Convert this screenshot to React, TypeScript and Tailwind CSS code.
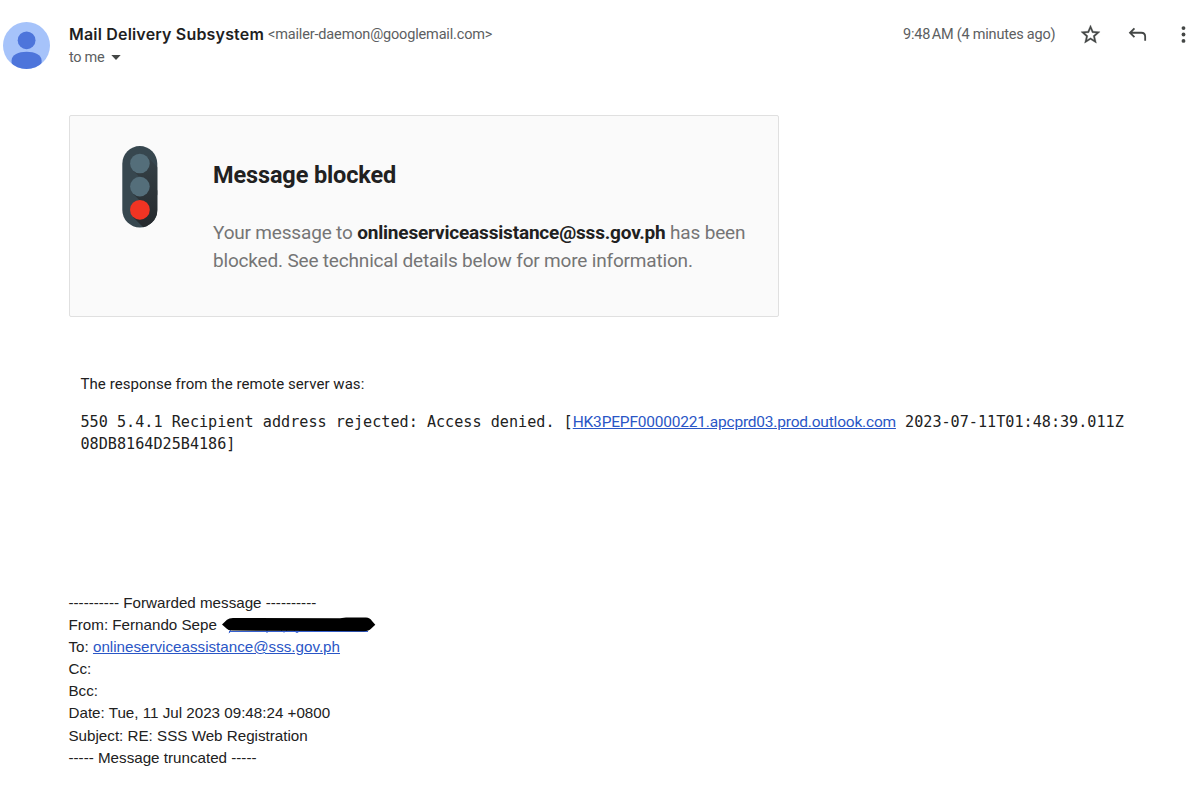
import React from "react";

const FORWARDED_FIELDS = [
  { label: "Cc:", value: "" },
  { label: "Bcc:", value: "" },
  { label: "Date:", value: "Tue, 11 Jul 2023 09:48:24 +0800" },
  { label: "Subject:", value: "RE: SSS Web Registration" },
];

const Avatar = () => (
  <svg className="w-[47px] h-[47px] shrink-0" viewBox="0 0 47 47">
    <defs>
      <clipPath id="avatar-clip">
        <circle cx="23.5" cy="23.5" r="23.5" />
      </clipPath>
    </defs>
    <g clipPath="url(#avatar-clip)">
      <rect width="47" height="47" fill="#a6c3fa" />
      <circle cx="23.6" cy="18.3" r="8.9" fill="#4d75db" />
      <path d="M8.6 47V38.5C8.6 32.5 15.5 29.7 23.6 29.7S38.6 32.5 38.6 38.5V47Z" fill="#4d75db" />
    </g>
  </svg>
);

const TrafficLight = () => (
  <svg className="w-[36px] h-[82px] shrink-0" viewBox="0 0 36 82">
    <defs>
      <clipPath id="light-clip">
        <rect x="0.3" y="0.1" width="35" height="81.4" rx="17.5" />
      </clipPath>
      <linearGradient id="light-shadow" x1="0" y1="0" x2="0" y2="82" gradientUnits="userSpaceOnUse">
        <stop offset="0.15" stopColor="#354147" />
        <stop offset="1" stopColor="#25292c" />
      </linearGradient>
    </defs>
    <g clipPath="url(#light-clip)">
      <rect width="36" height="82" fill="#37474f" />
      <g fill="url(#light-shadow)">
        <path d="M24.9 10.5L36 21.6V49.5L10.9 24.5Z" />
        <path d="M24.9 33.7L36 44.8V72.8L10.9 47.7Z" />
        <path d="M24.9 56.9L36 68V82H22L10.9 70.9Z" />
      </g>
    </g>
    <circle cx="17.9" cy="17.5" r="9.8" fill="#546e7a" />
    <circle cx="17.9" cy="40.6" r="9.8" fill="#546e7a" />
    <circle cx="17.9" cy="63.8" r="9.9" fill="#f03423" />
  </svg>
);

const RedactedAddress = () => (
  <svg className="w-[156px] h-[22px] shrink-0" viewBox="0 0 156 22">
    <path d="M8 17.5H147" stroke="#3560d0" strokeWidth="1" />
    <path
      d="M9.5 15.5Q9.5 19 7.8 18.8M46 15V19M60 16Q63 20 66 16M73 16Q76 21 79 16"
      stroke="#3560d0"
      strokeWidth="1"
      fill="none"
    />
    <path
      d="M1 10.4L6 5.8Q8 4 12 4L119 4.2L125 3.5H145Q149 3.7 151 7L154.3 10.8L150 14.8Q148 17.2 143 17.2L103 17L11 16.6Q7 16.6 5.5 14.6Z"
      fill="#000"
    />
  </svg>
);

const Header = () => (
  <header className="flex items-start h-[47px] pl-[3px] font-[Roboto,sans-serif] text-[#5c5e61]">
    <Avatar />
    <div className="ml-[19px] flex-1">
      <div className="flex items-center h-6 whitespace-nowrap">
        <h3 className="w-[199px] font-[Inter,sans-serif] text-[16px] tracking-[0.18px] font-semibold text-[#1f1f1f]">
          Mail Delivery Subsystem
        </h3>
        <span className="pt-px text-[14.5px] tracking-[-0.16px]">&lt;mailer-daemon@googlemail.com&gt;</span>
      </div>
      <div className="flex items-center h-[22px] pt-px text-[14.5px] tracking-[-0.3px]">
        <span>to me</span>
        <svg className="ml-[7px] w-[10px] h-[5px]" viewBox="0 0 10 5">
          <path d="M0.3 0H9.7L5 4.9Z" fill="#444746" />
        </svg>
      </div>
    </div>
    <div className="flex items-center h-6 text-[#444746]">
      <span className="w-[153px] pt-px text-[14.5px] tracking-[-0.22px] text-[#5c5e61] whitespace-nowrap">
        9:48{"\u202f"}AM (4 minutes ago)
      </span>
      <svg
        className="ml-[23px] w-[23px] h-[23px]"
        viewBox="0 0 24 24"
        fill="currentColor"
        stroke="currentColor"
        strokeWidth="0.3"
      >
        <path d="M22 9.24l-7.19-.62L12 2 9.19 8.63 2 9.24l5.46 4.73L5.82 21 12 17.27 18.18 21l-1.63-7.03L22 9.24zM12 15.4l-3.76 2.27 1-4.28-3.32-2.88 4.38-.38L12 6.1l1.71 4.04 4.38.38-3.32 2.88 1 4.28L12 15.4z" />
      </svg>
      <svg
        className="ml-[24px] w-[23px] h-[23px]"
        viewBox="0 0 24 24"
        fill="none"
        stroke="currentColor"
        strokeWidth="1.9"
      >
        <path d="M8.8 5.6L4.2 10.2L8.8 14.8M4.5 10.2H16Q20 10.2 20 14.2V18.6" />
      </svg>
      <svg className="ml-[23px] mr-[5px] w-[23px] h-[23px] -mx-1" viewBox="0 0 24 24" fill="currentColor">
        <circle cx="12" cy="5.3" r="2" />
        <circle cx="12" cy="12" r="2" />
        <circle cx="12" cy="18.7" r="2" />
      </svg>
    </div>
  </header>
);

const BlockedCard = () => (
  <section className="flex w-[710.5px] h-[202px] rounded-[2px] border border-[#e0e0e0] bg-[#fafafa] pl-[52px] pt-[30px] font-[Roboto,sans-serif]">
    <TrafficLight />
    <div className="ml-[55.5px] pt-[13px] whitespace-nowrap">
      <h2 className="text-[23.5px] leading-8 tracking-[-0.13px] font-bold text-[#212121]">Message blocked</h2>
      <p className="mt-[28px] text-[19px] leading-7 tracking-[-0.18px] text-[#757575]">
        Your message to <b className="font-bold text-[#212121]">onlineserviceassistance@sss.gov.ph</b> has been
        <br />
        blocked. See technical details below for more information.
      </p>
    </div>
  </section>
);

const ServerResponse = () => (
  <section className="pl-3 text-[#212121] whitespace-nowrap">
    <p className="font-[Roboto,sans-serif] text-[15px] leading-[22px] tracking-[0.06px]">
      The response from the remote server was:
    </p>
    <p className="mt-4 font-['DejaVu_Sans_Mono',monospace] text-[15.15px] leading-[22px]">
      550 5.4.1 Recipient address rejected: Access denied. [
      <a className="font-[Roboto,sans-serif] text-[15.5px] tracking-[-0.2px] text-[#2a56c6] underline">
        HK3PEPF00000221.apcprd03.prod.outlook.com
      </a>{" "}
      2023-07-11T01:48:39.011Z
      <br />
      08DB8164D25B4186]
    </p>
  </section>
);

const ForwardedMessage = () => (
  <section className="font-['Liberation_Sans',Arial,sans-serif] text-[15.18px] leading-[22.1px] text-[#212121] whitespace-nowrap">
    <p>---------- Forwarded message ----------</p>
    <div className="flex h-[22.1px]">
      <span className="w-[152px]">From: Fernando Sepe</span>
      <RedactedAddress />
    </div>
    <p>
      To: <a className="text-[#2a56c6] underline">onlineserviceassistance@sss.gov.ph</a>
    </p>
    {FORWARDED_FIELDS.map((field) => (
      <p key={field.label}>
        {field.label} {field.value}
      </p>
    ))}
    <p>----- Message truncated -----</p>
  </section>
);

const App = () => {
  return (
    <main className="w-[1200px] h-[788px] overflow-hidden bg-white pt-[22px]">
      <Header />
      <div className="pl-[68.5px] pt-[46px]">
        <BlockedCard />
        <div className="mt-[56px]">
          <ServerResponse />
        </div>
        <div className="mt-[137px]">
          <ForwardedMessage />
        </div>
      </div>
    </main>
  );
};

export default App;
